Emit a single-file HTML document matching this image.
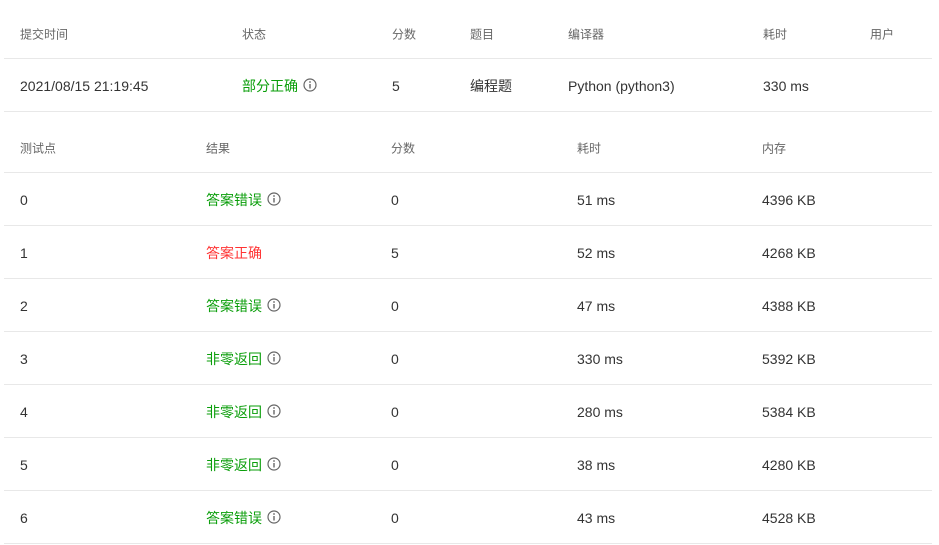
<!DOCTYPE html>
<html><head><meta charset="utf-8"><style>
body{margin:0;width:939px;height:545px;background:#fff;font-family:"Liberation Sans","Noto Sans CJK SC",sans-serif;position:relative;overflow:hidden}
.t{position:absolute;white-space:nowrap;transform:translateY(-50%)}
.h{font-size:12px;color:#666}
.b{font-size:14px;color:#333}
.g{color:#0a9e0a;font-size:14px}
.r{color:#f33;font-size:14px}
.l{position:absolute;left:4px;width:928px;height:1px;background:#e8e8e8}
.i{display:inline-block;vertical-align:-1px;margin-left:5px}
</style></head><body>
<div class="t h" style="left:20px;top:34px">提交时间</div>
<div class="t h" style="left:242px;top:34px">状态</div>
<div class="t h" style="left:392px;top:34px">分数</div>
<div class="t h" style="left:470px;top:34px">题目</div>
<div class="t h" style="left:568px;top:34px">编译器</div>
<div class="t h" style="left:763px;top:34px">耗时</div>
<div class="t h" style="left:870px;top:34px">用户</div>
<div class="l" style="top:58px"></div>
<div class="t b" style="left:20px;top:86px">2021/08/15 21:19:45</div>
<div class="t g" style="left:242px;top:86px">部分正确<svg class="i" width="14" height="14" viewBox="0 0 14 14"><circle cx="7" cy="7" r="6" fill="none" stroke="#666" stroke-width="1.2"/><rect x="6.3" y="6" width="1.4" height="4.5" fill="#666"/><circle cx="7" cy="4" r=".9" fill="#666"/></svg></div>
<div class="t b" style="left:392px;top:86px">5</div>
<div class="t b" style="left:470px;top:86px">编程题</div>
<div class="t b" style="left:568px;top:86px">Python (python3)</div>
<div class="t b" style="left:763px;top:86px">330 ms</div>
<div class="l" style="top:111px"></div>

<div class="t h" style="left:20px;top:148px">测试点</div>
<div class="t h" style="left:206px;top:148px">结果</div>
<div class="t h" style="left:391px;top:148px">分数</div>
<div class="t h" style="left:577px;top:148px">耗时</div>
<div class="t h" style="left:762px;top:148px">内存</div>
<div class="l" style="top:172px"></div>

<div id="rows"></div>
<script>
var d=[["0","答案错误",1,"0","51 ms","4396 KB"],["1","答案正确",0,"5","52 ms","4268 KB"],["2","答案错误",1,"0","47 ms","4388 KB"],["3","非零返回",1,"0","330 ms","5392 KB"],["4","非零返回",1,"0","280 ms","5384 KB"],["5","非零返回",1,"0","38 ms","4280 KB"],["6","答案错误",1,"0","43 ms","4528 KB"]];
var ic='<svg class="i" width="14" height="14" viewBox="0 0 14 14"><circle cx="7" cy="7" r="6" fill="none" stroke="#666" stroke-width="1.2"/><rect x="6.3" y="6" width="1.4" height="4.5" fill="#666"/><circle cx="7" cy="4" r=".9" fill="#666"/></svg>';
var h="";
d.forEach(function(r,k){var y=200+53*k;
h+='<div class="t b" style="left:20px;top:'+y+'px">'+r[0]+'</div>';
h+='<div class="t '+(r[2]?'g':'r')+'" style="left:206px;top:'+y+'px">'+r[1]+(r[2]?ic:'')+'</div>';
h+='<div class="t b" style="left:391px;top:'+y+'px">'+r[3]+'</div>';
h+='<div class="t b" style="left:577px;top:'+y+'px">'+r[4]+'</div>';
h+='<div class="t b" style="left:762px;top:'+y+'px">'+r[5]+'</div>';
h+='<div class="l" style="top:'+(y+25)+'px"></div>';});
document.getElementById("rows").innerHTML=h;
</script>
</body></html>
